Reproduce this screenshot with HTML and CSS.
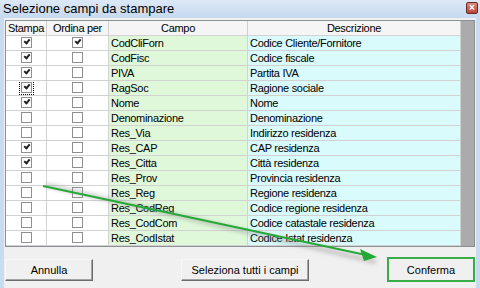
FILE: index.html
```html
<!DOCTYPE html>
<html>
<head>
  <title>Selezione campi da stampare</title>
  <link rel="stylesheet" href="styles.css">
</head>
<body>
  <div class="window">
    <!-- Title bar -->
    <div class="titlebar">
      <span class="title">Selezione campi da stampare</span>
      <span class="close">&#215;</span>
    </div>
    <div class="frame">
      <div class="client">
        <!-- Grid with the fields -->
        <div class="grid">
          <table class="fields">
            <colgroup>
              <col class="c-stampa"><col class="c-ordina"><col class="c-campo"><col class="c-descr">
            </colgroup>
            <thead>
              <tr><th>Stampa</th><th>Ordina per</th><th>Campo</th><th>Descrizione</th></tr>
            </thead>
            <tbody>
              <tr><td class="chk"><span class="cb on"></span></td><td class="chk"><span class="cb on"></span></td><td class="campo">CodCliForn</td><td class="descr">Codice Cliente/Fornitore</td></tr>
              <tr><td class="chk"><span class="cb on"></span></td><td class="chk"><span class="cb"></span></td><td class="campo">CodFisc</td><td class="descr">Codice fiscale</td></tr>
              <tr><td class="chk"><span class="cb on"></span></td><td class="chk"><span class="cb"></span></td><td class="campo">PIVA</td><td class="descr">Partita IVA</td></tr>
              <tr><td class="chk"><span class="cb on focus"></span></td><td class="chk"><span class="cb"></span></td><td class="campo">RagSoc</td><td class="descr">Ragione sociale</td></tr>
              <tr><td class="chk"><span class="cb on"></span></td><td class="chk"><span class="cb"></span></td><td class="campo">Nome</td><td class="descr">Nome</td></tr>
              <tr><td class="chk"><span class="cb"></span></td><td class="chk"><span class="cb"></span></td><td class="campo">Denominazione</td><td class="descr">Denominazione</td></tr>
              <tr><td class="chk"><span class="cb"></span></td><td class="chk"><span class="cb"></span></td><td class="campo">Res_Via</td><td class="descr">Indirizzo residenza</td></tr>
              <tr><td class="chk"><span class="cb on"></span></td><td class="chk"><span class="cb"></span></td><td class="campo">Res_CAP</td><td class="descr">CAP residenza</td></tr>
              <tr><td class="chk"><span class="cb on"></span></td><td class="chk"><span class="cb"></span></td><td class="campo">Res_Citta</td><td class="descr">Città residenza</td></tr>
              <tr><td class="chk"><span class="cb"></span></td><td class="chk"><span class="cb"></span></td><td class="campo">Res_Prov</td><td class="descr">Provincia residenza</td></tr>
              <tr><td class="chk"><span class="cb"></span></td><td class="chk"><span class="cb"></span></td><td class="campo">Res_Reg</td><td class="descr">Regione residenza</td></tr>
              <tr><td class="chk"><span class="cb"></span></td><td class="chk"><span class="cb"></span></td><td class="campo">Res_CodReg</td><td class="descr">Codice regione residenza</td></tr>
              <tr><td class="chk"><span class="cb"></span></td><td class="chk"><span class="cb"></span></td><td class="campo">Res_CodCom</td><td class="descr">Codice catastale residenza</td></tr>
              <tr><td class="chk"><span class="cb"></span></td><td class="chk"><span class="cb"></span></td><td class="campo">Res_CodIstat</td><td class="descr">Codice Istat residenza</td></tr>
            </tbody>
          </table>
          <div class="empty"></div>
        </div>
        <!-- Buttons -->
        <div class="buttons">
          <button class="btn btn-annulla">Annulla</button>
          <button class="btn btn-tutti">Seleziona tutti i campi</button>
          <button class="btn btn-conferma">Conferma</button>
        </div>
      </div>
    </div>
    <!-- Green arrow drawn over the dialog -->
    <svg class="arrow" width="480" height="288" viewBox="0 0 480 288">
      <defs>
        <filter id="blur" x="-10%" y="-50%" width="120%" height="200%">
          <feGaussianBlur stdDeviation="2"/>
        </filter>
      </defs>
      <line x1="46" y1="185" x2="376" y2="262" stroke="#888" stroke-opacity="0.45" stroke-width="4" filter="url(#blur)"/>
      <line x1="43" y1="186" x2="366" y2="255" stroke="#26a836" stroke-width="2"/>
      <polygon points="377,257 360,249 364,261" fill="#26a836"/>
    </svg>
  </div>
</body>
</html>
```

FILE: styles.css
```css
/* Dialog window in the old Windows look */
body {
  margin: 0;
  background-color: #f0f0f0;
  font-family: "Liberation Sans", Arial, sans-serif;
  font-size: 11px;
}
.window {
  position: relative;
  width: 480px;
  height: 288px;
  overflow: hidden;
  background-color: #c9dbf0;
}
.titlebar {
  position: relative;
  height: 18px;
  padding-left: 3px;
  background: linear-gradient(#dce8f6, #c6d9ef);
}
.title {
  font-size: 13px;
  line-height: 17px;
  color: #000;
}
.close {
  position: absolute;
  top: 2px;
  right: 2px;
  width: 10px;
  height: 10px;
  line-height: 9px;
  text-align: center;
  font-size: 10px;
  font-weight: bold;
  color: #fff;
  background: linear-gradient(#d88a7c, #b5473a);
  border: 1px solid #6e2a22;
  border-radius: 2px;
}
.frame {
  padding: 0 4px;
  height: 270px;
}
.client {
  height: 100%;
  padding: 2px 1px 0 1px;
  background-color: #f0f0f0;
}
.grid {
  display: flex;
  border: 1px solid #8c8f94;
  background-color: #ababab;
}
table.fields {
  width: 455px;
  table-layout: fixed;
  border-collapse: separate;
  border-spacing: 0;
  background-color: #fff;
  font-size: 11px;
}
col.c-stampa { width: 41px; }
col.c-ordina { width: 62px; }
col.c-campo { width: 139px; }
col.c-descr { width: 213px; }
th, td {
  box-sizing: border-box;
  height: 15px;
  padding: 0 2px;
  border-right: 1px solid #d2d2d2;
  border-bottom: 1px solid #d2d2d2;
  white-space: nowrap;
  overflow: hidden;
  font-weight: normal;
  font-size: 11px;
  letter-spacing: -0.3px;
  line-height: 14px;
  color: #000;
}
th {
  text-align: center;
  background-color: #f5f5f5;
  border-right-color: #cfcfcf;
}
td.chk {
  text-align: center;
  padding: 0;
}
td.campo {
  background-color: #e0f8da;
}
td.descr {
  background-color: #d9fbfb;
}
.empty {
  flex: 1;
}
.cb {
  position: relative;
  display: inline-block;
  box-sizing: border-box;
  width: 11px;
  height: 11px;
  margin-top: 1px;
  vertical-align: top;
  border: 1px solid #8e8f8f;
  background-color: #fff;
}
.cb.on::after {
  content: "";
  position: absolute;
  left: 2px;
  top: 1px;
  width: 4px;
  height: 2px;
  border-left: 2px solid #222;
  border-bottom: 2px solid #222;
  transform: rotate(-50deg);
}
.cb.focus {
  outline: 1px dotted #000;
  outline-offset: 1px;
}
.buttons {
  display: flex;
  align-items: center;
  margin-top: 10px;
}
.btn {
  box-sizing: border-box;
  height: 22px;
  padding: 0;
  font-family: "Liberation Sans", Arial, sans-serif;
  font-size: 11px;
  color: #000;
  background-color: #f0f0f0;
  border: 1px solid;
  border-color: #f8f8f8 #6b6b6b #6b6b6b #f8f8f8;
  box-shadow: inset -1px -1px 0 #a3a3a3;
}
.btn-annulla {
  width: 88px;
}
.btn-tutti {
  width: 128px;
  margin-left: 88px;
}
.btn-conferma {
  width: 88px;
  height: 25px;
  margin-left: auto;
  border: 2px solid #38ac46;
  box-shadow: none;
}
.arrow {
  position: absolute;
  left: 0;
  top: 0;
  pointer-events: none;
}
```
